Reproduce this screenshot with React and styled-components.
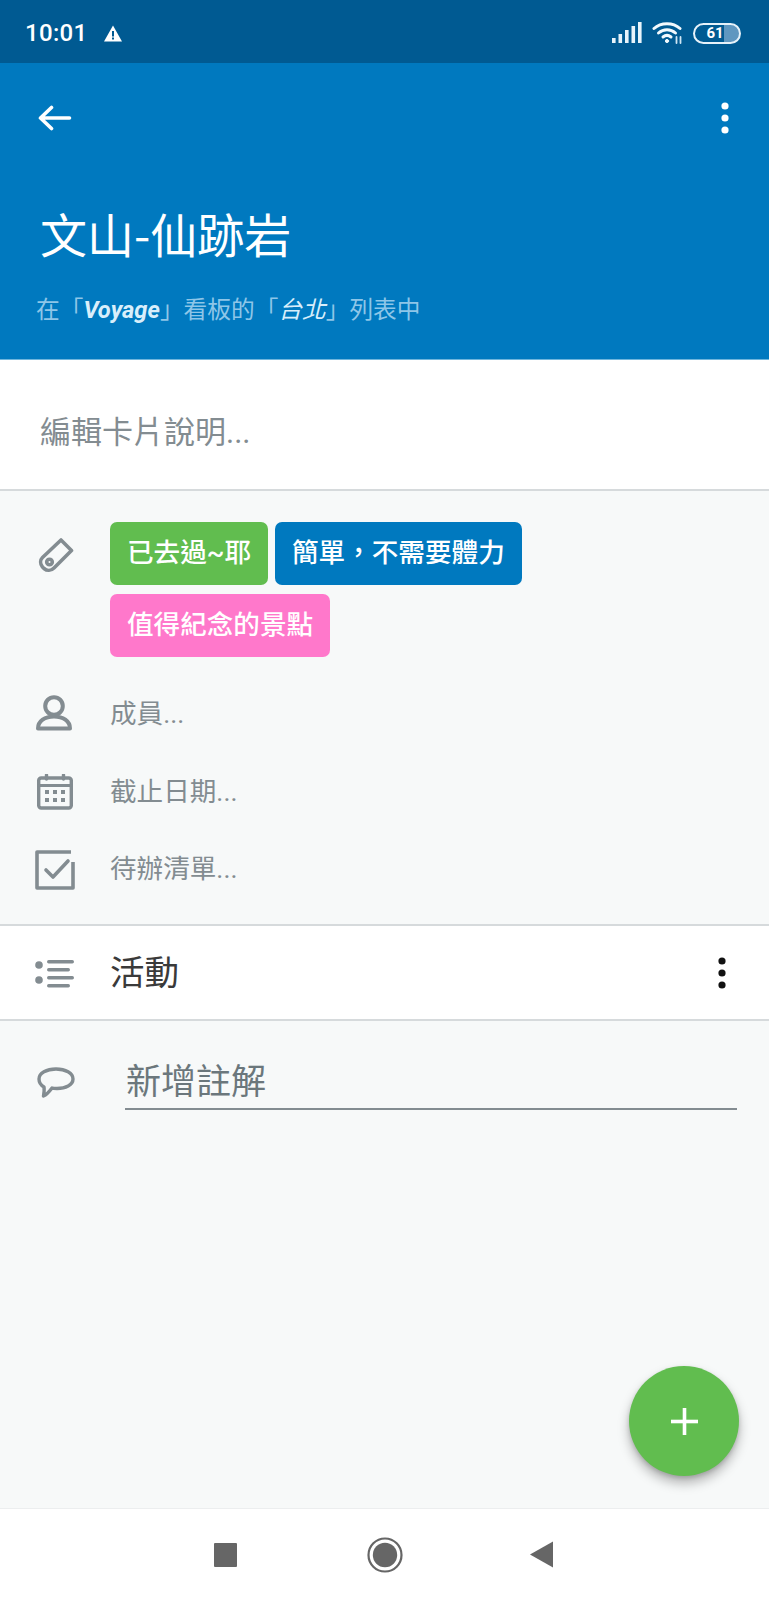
import React from "react";
import styled, { createGlobalStyle } from "styled-components";

const Global = createGlobalStyle`
  html, body { margin: 0; padding: 0; background: #fff; }
  body { font-family: Roboto, "Noto Sans CJK TC", sans-serif; }
  * { box-sizing: border-box; }
`;

const Page = styled.div`
  position: relative;
  width: 769px;
  height: 1600px;
  display: flex;
  flex-direction: column;
  background: #f7f9f9;
  overflow: hidden;
`;
const StatusBar = styled.div`
  height: 63px;
  background: #005a92;
  color: #fff;
  display: flex;
  align-items: center;
  padding: 3px 28px 0 25px;
  gap: 17px;
`;
const Time = styled.span`
  font: 500 24px/1 Roboto, sans-serif;
  letter-spacing: 0.3px;
`;
const StatusIcons = styled.div`
  margin-left: auto;
  display: flex;
  align-items: center;
  gap: 10px;
`;
const Battery = styled.div`
  position: relative;
  width: 48px;
  height: 21px;
  border: 2px solid #e6f2fa;
  border-radius: 11px;
  overflow: hidden;
  display: flex;
  align-items: center;
  justify-content: center;
  padding-right: 4px;
  font: 700 15px/1 Roboto, sans-serif;
  color: #fff;
  background: linear-gradient(90deg, transparent 66%, #5f97c0 66%);
`;
const Header = styled.header`
  height: 297px;
  background: #0079bf;
  border-bottom: 1px solid #6fb6dd;
  color: #fff;
  display: flex;
  flex-direction: column;
  padding: 0 36px;
`;
const HeaderActions = styled.div`
  height: 110px;
  padding: 0 4px 0 2px;
  display: flex;
  align-items: center;
  justify-content: space-between;
`;
const Title = styled.h1`
  margin: 29px 0 0 4px;
  font: 400 47px/62px "Noto Sans CJK TC", sans-serif;
  color: #fff;
  letter-spacing: 0;
`;
const Subtitle = styled.p`
  margin: 29px 0 0;
  font: 400 23.7px/34px Roboto, "Noto Sans CJK TC", sans-serif;
  color: #8ec6e8;
  white-space: nowrap;
`;
const SubtitleName = styled.em`
  color: #d8eefb;
  font-style: italic;
  font-weight: ${p => p.$weight};
`;
const Description = styled.div`
  height: 131px;
  background: #fff;
  border-bottom: 2px solid #d6dadc;
  display: flex;
  align-items: center;
  padding: 15px 0 0 40px;
  font: 400 31px/1 Roboto, "Noto Sans CJK TC", sans-serif;
  color: #838c91;
`;
const Details = styled.section`
  height: 435px;
  padding: 31px 0 0;
  display: flex;
  flex-direction: column;
  border-bottom: 2px solid #d6dadc;
`;
const LabelRow = styled.div`
  display: flex;
  padding-left: 36px;
`;
const IconSlot = styled.div`
  width: 74px;
  flex: none;
  display: flex;
  justify-content: flex-start;
`;
const Labels = styled.div`
  display: flex;
  flex-wrap: wrap;
  gap: 9px 7px;
  width: 460px;
`;
const Label = styled.span`
  height: 63px;
  display: inline-flex;
  align-items: center;
  padding: 0 17px;
  border-radius: 7px;
  font: 500 26.6px/1 Roboto, "Noto Sans CJK TC", sans-serif;
  color: #fff;
  background: ${p => p.$color};
`;
const DetailRows = styled.div`
  margin-top: 19px;
  display: flex;
  flex-direction: column;
`;
const DetailRow = styled.div`
  height: 77.5px;
  display: flex;
  align-items: center;
  padding-left: 36px;
  font: 400 26.6px/1 Roboto, "Noto Sans CJK TC", sans-serif;
  color: #838c91;
`;
const ActivityBar = styled.div`
  height: 95px;
  background: #fff;
  border-bottom: 2px solid #d6dadc;
  display: flex;
  align-items: center;
  padding: 0 43px 0 35px;
`;
const ActivityTitle = styled.div`
  margin: -4px 0 0 35px;
  font: 400 34.5px/1 "Noto Sans CJK TC", sans-serif;
  color: #3a3a3a;
`;
const Spacer = styled.div`
  flex: 1;
`;
const CommentArea = styled.div`
  flex: 1;
  display: flex;
  align-items: flex-start;
  padding: 26px 32px 0 37px;
`;
const CommentInput = styled.div`
  flex: 1;
  margin-left: 50px;
  height: 63px;
  border-bottom: 2px solid #838c91;
  display: flex;
  align-items: center;
  padding: 2px 0 0 1px;
  font: 400 35px/1 "Noto Sans CJK TC", sans-serif;
  color: #6b777c;
`;
const Fab = styled.button`
  position: absolute;
  left: 629px;
  top: 1366px;
  width: 110px;
  height: 110px;
  border: 0;
  padding: 0;
  border-radius: 50%;
  background: #61bd4f;
  box-shadow: 0 7px 12px rgba(0,0,0,0.28), 0 2px 4px rgba(0,0,0,0.14);
  display: flex;
  align-items: center;
  justify-content: center;
`;
const NavBar = styled.nav`
  height: 92px;
  background: #fff;
  border-top: 1px solid #eceeef;
  display: flex;
  align-items: center;
  padding: 0 0 0 214px;
`;
const NavSlot = styled.div`
  width: ${p => p.$w}px;
  display: flex;
`;

const Gray = "#838c91";

const Back = () => (
  <svg width="34" height="26" viewBox="0 0 34 26" fill="none" stroke="#fff" strokeWidth="3.6" strokeLinecap="round" strokeLinejoin="round">
    <path d="M2.5 13H31.5M13.5 2.5L2.5 13L13.5 23.5" />
  </svg>
);
const Dots = ({ color }) => (
  <svg width="8" height="32" viewBox="0 0 8 32" fill={color}>
    <circle cx="4" cy="4" r="3.6" />
    <circle cx="4" cy="16" r="3.6" />
    <circle cx="4" cy="28" r="3.6" />
  </svg>
);

export default function App() {
  return (
    <Page>
      <Global />
      <StatusBar>
        <Time>10:01</Time>
        <svg width="18" height="17" viewBox="0 0 18 17">
          <path fillRule="evenodd" fill="#fff" d="M9 0.5L18 16.5H0ZM8 6V11.5H10V6ZM8 12.5V14.5H10V12.5Z" />
        </svg>
        <StatusIcons>
          <svg width="30" height="22" viewBox="0 0 30 22" fill="#e8f4fb">
            <rect x="0" y="16" width="3.6" height="5" />
            <rect x="6.5" y="12" width="3.6" height="9" />
            <rect x="13" y="8" width="3.6" height="13" />
            <rect x="19.5" y="4" width="3.6" height="17" />
            <rect x="26" y="0" width="3.6" height="21" />
          </svg>
          <svg width="31" height="24" viewBox="0 0 31 24" fill="none" stroke="#f2f9fd" strokeWidth="3" strokeLinecap="round">
            <path d="M2 7.5C9 1 21 1 28 7.5" />
            <path d="M6.5 12C11.5 7.5 18.5 7.5 23.5 12" />
            <path d="M11 16C13.5 14 16.5 14 19 16" />
            <circle cx="15" cy="20" r="1.6" fill="#f2f9fd" strokeWidth="1" />
            <path d="M24.5 16V22M28.5 16V22" strokeWidth="1.8" stroke="#cfe6f4" />
          </svg>
          <Battery>61</Battery>
        </StatusIcons>
      </StatusBar>

      <Header>
        <HeaderActions>
          <Back />
          <Dots color="#fff" />
        </HeaderActions>
        <Title>文山-仙跡岩</Title>
        <Subtitle>在「<SubtitleName $weight={700}>Voyage</SubtitleName>」看板的「<SubtitleName $weight={400}>台北</SubtitleName>」列表中</Subtitle>
      </Header>

      <Description>編輯卡片說明...</Description>

      <Details>
        <LabelRow>
          <IconSlot>
            <svg width="36" height="36" viewBox="0 0 36 36" fill="none" stroke={Gray} strokeWidth="3.6" strokeLinejoin="round" style={{ marginTop: 15, marginLeft: 2 }}>
              <path d="M23 3L33.5 13.5L16 31C13 34 9 34 6 31.5L4.5 30C2 27 2 23 4.5 20.5Z" />
              <circle cx="11.5" cy="25" r="2.8" />
            </svg>
          </IconSlot>
          <Labels>
            <Label $color="#61bd4f">已去過~耶</Label>
            <Label $color="#0079bf">簡單，不需要體力</Label>
            <Label $color="#ff78cb">值得紀念的景點</Label>
          </Labels>
        </LabelRow>
        <DetailRows>
          <DetailRow>
            <IconSlot>
              <svg width="36" height="36" viewBox="0 0 36 36" fill="none" stroke={Gray} strokeWidth="4" style={{ marginTop: -3 }}>
                <circle cx="18" cy="11" r="8.8" />
                <path d="M2 33.5C2 26 9 21.5 18 21.5C27 21.5 34 26 34 33.5Z" strokeLinejoin="round" />
              </svg>
            </IconSlot>
            成員...
          </DetailRow>
          <DetailRow>
            <IconSlot>
              <svg width="36" height="36" viewBox="0 0 36 36" fill="none" stroke={Gray} strokeWidth="3.4" strokeLinecap="round" style={{ marginLeft: 1 }}>
                <rect x="1.7" y="4" width="32.6" height="30" rx="2.5" />
                <path d="M2 11.5H34" strokeWidth="3" />
                <path d="M9.5 1V5M26.5 1V5" />
                <g fill={Gray} stroke="none">
                  <rect x="8" y="16" width="4" height="4" /><rect x="16" y="16" width="4" height="4" /><rect x="24" y="16" width="4" height="4" />
                  <rect x="8" y="24" width="4" height="4" /><rect x="16" y="24" width="4" height="4" /><rect x="24" y="24" width="4" height="4" />
                </g>
              </svg>
            </IconSlot>
            截止日期...
          </DetailRow>
          <DetailRow>
            <IconSlot>
              <svg width="40" height="40" viewBox="0 0 40 40" fill="none" stroke={Gray} strokeWidth="3.6" strokeLinejoin="round" style={{ marginLeft: -1 }}>
                <path d="M36 2H2V38H38V12" />
                <path d="M11 20L18 27L33 11" strokeLinecap="round" />
              </svg>
            </IconSlot>
            待辦清單...
          </DetailRow>
        </DetailRows>
      </Details>

      <ActivityBar>
        <svg width="40" height="30" viewBox="0 0 40 30" fill={Gray}>
          <circle cx="4" cy="7" r="3.8" />
          <circle cx="4" cy="22" r="3.8" />
          <rect x="12" y="2" width="27" height="3.4" rx="1.7" />
          <rect x="12" y="10" width="23" height="3.4" rx="1.7" />
          <rect x="12" y="18" width="27" height="3.4" rx="1.7" />
          <rect x="12" y="26" width="23" height="3.4" rx="1.7" />
        </svg>
        <ActivityTitle>活動</ActivityTitle>
        <Spacer />
        <Dots color="#111" />
      </ActivityBar>

      <CommentArea>
        <svg width="38" height="32" viewBox="0 0 38 32" fill="none" stroke={Gray} strokeWidth="3.4" strokeLinejoin="round" style={{ marginTop: 20 }}>
          <path d="M19 2C28.5 2 36 6 36 12C36 18 28.5 21.5 20 21.5C18 21.5 16 21.5 15 21C12 25 9 28 6.5 29C7 26 7.5 23 7 20C3.5 18 2 15 2 12C2 6 9.5 2 19 2Z" />
        </svg>
        <CommentInput>新增註解</CommentInput>
      </CommentArea>

      <Fab aria-label="add">
        <svg width="27" height="27" viewBox="0 0 27 27" fill="#fff">
          <rect x="11.7" y="0" width="3.6" height="27" />
          <rect x="0" y="11.7" width="27" height="3.6" />
        </svg>
      </Fab>

      <NavBar>
        <NavSlot $w={153}>
          <svg width="23" height="24" viewBox="0 0 23 24"><rect width="23" height="24" rx="1" fill="#666" /></svg>
        </NavSlot>
        <NavSlot $w={163}>
          <svg width="36" height="36" viewBox="0 0 36 36">
            <circle cx="18" cy="18" r="16.5" fill="none" stroke="#666" strokeWidth="2.2" />
            <circle cx="18" cy="18" r="12.2" fill="#666" />
          </svg>
        </NavSlot>
        <NavSlot $w={30}>
          <svg width="23" height="27" viewBox="0 0 23 27"><path d="M23 0.5V26.5L0 13.5Z" fill="#666" /></svg>
        </NavSlot>
      </NavBar>
    </Page>
  );
}
